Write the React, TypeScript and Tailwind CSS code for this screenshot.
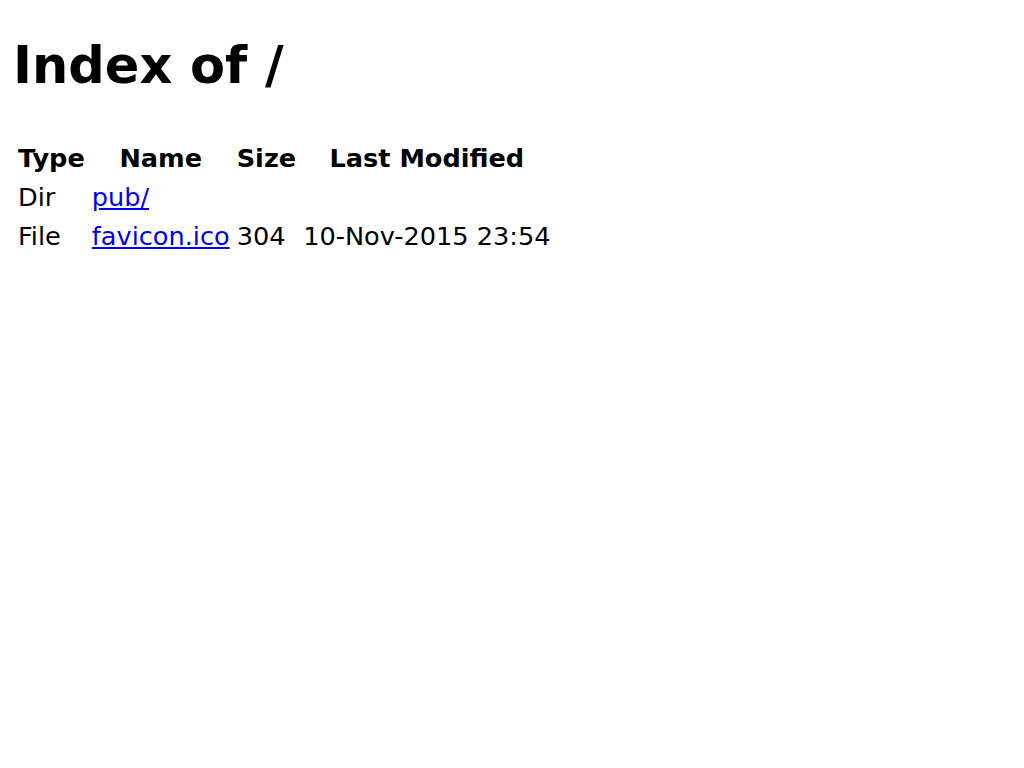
const rows = [
  { type: "Dir", name: "pub/", size: "", modified: "" },
  { type: "File", name: "favicon.ico", size: "304", modified: "10-Nov-2015 23:54" },
];

export default function App() {
  return (
    <div className="min-h-screen bg-white py-[12px] pl-[13px] pr-[12px] text-[25.6px] leading-[30px] text-black font-['DejaVu_Sans',sans-serif]">
      <h1 className="mt-[24px] mb-[41px] text-[51px] font-bold leading-[60px]">Index of /</h1>
      <table className="border-separate border-spacing-[3px]">
        <thead>
          <tr>
            <th className="px-[2px] py-[3px] text-center font-bold">Type</th>
            <th className="px-[2px] py-[3px] text-center font-bold">Name</th>
            <th className="px-[2px] py-[3px] text-center font-bold">Size</th>
            <th className="px-[2px] py-[3px] text-center font-bold">Last Modified</th>
          </tr>
        </thead>
        <tbody>
          {rows.map((r) => (
            <tr key={r.name}>
              <td className="px-[2px] py-[3px] text-left">{r.type}</td>
              <td className="px-[2px] py-[3px] text-left">
                <a href="#" className="text-[#0000ee] underline">
                  {r.name}
                </a>
              </td>
              <td className="px-[2px] py-[3px] text-left">{r.size}</td>
              <td className="px-[2px] py-[3px] text-left">{r.modified}</td>
            </tr>
          ))}
        </tbody>
      </table>
    </div>
  );
}
